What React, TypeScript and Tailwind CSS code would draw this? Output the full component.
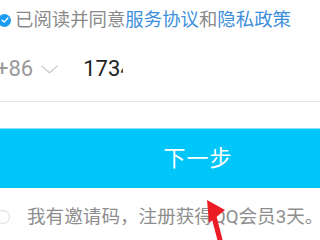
import React from "react";

const font = { fontFamily: '"Roboto", "Noto Sans CJK SC", sans-serif' };

export default function App() {
  return (
    <div className="relative w-[320px] h-[240px] overflow-hidden bg-white" style={font}>
      {/* agreement row */}
      <div className="flex items-center h-[24px] mt-[8px] -ml-[2px]">
        <div className="w-[13px] h-[13px] rounded-full bg-[#1c9cf0] flex items-center justify-center shrink-0">
          <svg viewBox="0 0 12 12" className="w-[10px] h-[10px]">
            <path d="M2.5 6.2 L5 8.5 L9.5 3.6" fill="none" stroke="#fff" strokeWidth="1.6" strokeLinecap="round" strokeLinejoin="round" />
          </svg>
        </div>
        <span className="ml-[4px] text-[18.4px] leading-[24px] text-[#8a8a8a] whitespace-nowrap">
          已阅读并同意<span className="text-[#3d8fdc]">服务协议</span>和<span className="text-[#3d8fdc]">隐私政策</span>
        </span>
      </div>

      {/* phone row */}
      <div className="flex items-center h-[30px] mt-[22px] -ml-[4px]">
        <span className="text-[22px] leading-[30px] text-[#9a9a9a]">+86</span>
        <svg viewBox="0 0 20 10" className="ml-[7px] w-[19px] h-[9px]">
          <path d="M1 1 L10 8.5 L19 1" fill="none" stroke="#c2c2c2" strokeWidth="1.3" />
        </svg>
        <span className="ml-[24px] text-[22px] leading-[30px] text-[#222]">173</span>
        <span className="w-[3px] h-[14px] overflow-hidden text-[22px] leading-[14px] text-[#444]">4</span>
      </div>

      <div className="mt-[17px] h-px bg-[#e6e6e6]" />

      {/* next button */}
      <div className="mt-[26px] h-[60px] bg-[#00c6f9] border-t border-[#7fe3ff] flex items-center justify-center pl-[76px]">
        <span className="text-[22px] leading-[28px] text-white tracking-[1px]">下一步</span>
      </div>

      {/* invite row */}
      <div className="flex items-center h-[24px] mt-[17px] -ml-[4px]">
        <div className="w-[14px] h-[14px] rounded-full border border-[#dcdcdc] shrink-0" />
        <span className="ml-[17px] text-[18.6px] leading-[24px] text-[#8e8e8e] whitespace-nowrap">
          我有邀请码，注册获得QQ会员3天。
        </span>
      </div>

      {/* red annotation arrow */}
      <svg className="absolute left-0 top-0 w-[320px] h-[240px] pointer-events-none" viewBox="0 0 320 240">
        <path d="M213 213 L220 240" stroke="#ec1c24" strokeWidth="5" strokeLinecap="round" />
        <polygon points="207,200 225,210 209,223" fill="#ec1c24" />
      </svg>
    </div>
  );
}
